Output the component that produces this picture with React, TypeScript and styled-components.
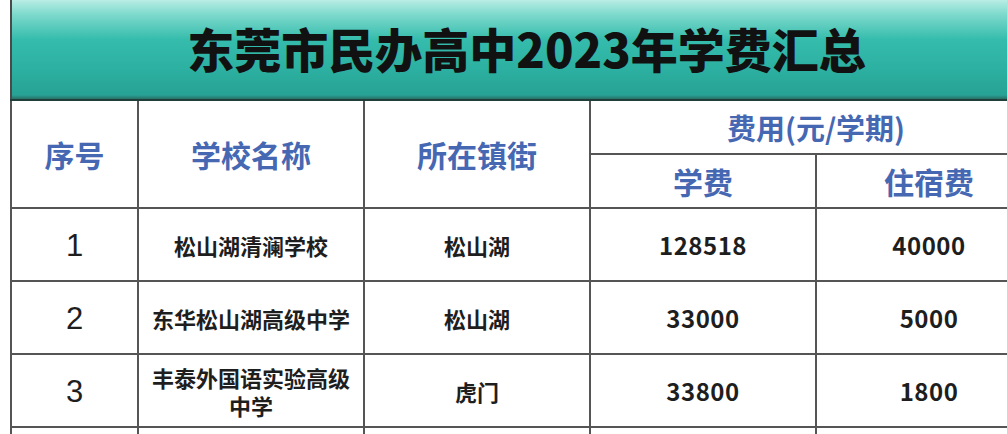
import { type FC } from 'react';
import styled, { createGlobalStyle } from 'styled-components';

const GlobalStyle = createGlobalStyle`
  html, body {
    margin: 0;
    padding: 0;
    background: #ffffff;
    overflow: hidden;
  }
  body {
    font-family: "Noto Sans CJK SC", "Noto Sans", sans-serif;
  }
`;

const Page = styled.div`
  width: 1007px;
  height: 434px;
  overflow: hidden;
  padding-left: 10px;
  box-sizing: border-box;
`;

const Table = styled.table`
  width: 1031px;
  border-collapse: collapse;
  table-layout: fixed;
`;

const TitleCell = styled.th`
  height: 95px;
  padding: 0 0 4px;
  border: 2px solid #4a4a4a;
  border-top: none;
  border-bottom: 2px solid #1f3f3b;
  background: linear-gradient(
    to bottom,
    #b9ede5 0%,
    #7fdacd 14%,
    #35bcac 40%,
    #2cb0a1 70%,
    #27a294 96%,
    #2a6f67 100%
  );
  font-family: "Noto Sans CJK SC", sans-serif;
  font-weight: 900;
  font-size: 47px;
  color: #111;
  text-align: center;
  vertical-align: middle;
`;

const HeadCell = styled.th<{ $h?: number; $size?: number }>`
  height: ${(p) => p.$h ?? 52}px;
  padding: 0;
  border: 2px solid #555;
  color: #4668b3;
  font-family: "Noto Sans CJK SC", sans-serif;
  font-weight: 700;
  font-size: ${(p) => p.$size ?? 30}px;
  line-height: 1;
  text-align: center;
  vertical-align: middle;
`;

const Row = styled.tr<{ $h: number }>`
  height: ${(p) => p.$h}px;
`;

const Cell = styled.td`
  padding: 0 8px;
  border: 2px solid #555;
  text-align: center;
  vertical-align: middle;
  color: #1e1e1e;
`;

const IndexCell = styled(Cell)`
  font-family: "Liberation Sans", Arial, sans-serif;
  font-size: 31px;
  font-weight: 400;
  padding-top: 3px;
`;

const NameCell = styled(Cell)`
  font-family: "Noto Sans CJK SC", sans-serif;
  font-size: 22px;
  font-weight: 700;
  line-height: 28px;
`;

const FeeCell = styled(Cell)`
  font-family: "Noto Sans CJK SC", "Noto Sans", sans-serif;
  font-size: 24px;
  font-weight: 700;
  letter-spacing: 0.5px;
`;

const rows = [
  { no: '1', name: '松山湖清澜学校', town: '松山湖', fee: '128518', dorm: '40000', h: 73 },
  { no: '2', name: '东华松山湖高级中学', town: '松山湖', fee: '33000', dorm: '5000', h: 73 },
  { no: '3', name: '丰泰外国语实验高级中学', town: '虎门', fee: '33800', dorm: '1800', h: 73 },
];

const App: FC = () => (
  <>
    <GlobalStyle />
    <Page>
      <Table>
        <colgroup>
          <col style={{ width: 127 }} />
          <col style={{ width: 226 }} />
          <col style={{ width: 226 }} />
          <col style={{ width: 226 }} />
          <col style={{ width: 226 }} />
        </colgroup>
        <thead>
          <tr>
            <TitleCell colSpan={5}>东莞市民办高中2023年学费汇总</TitleCell>
          </tr>
          <tr>
            <HeadCell rowSpan={2}>序号</HeadCell>
            <HeadCell rowSpan={2}>学校名称</HeadCell>
            <HeadCell rowSpan={2}>所在镇街</HeadCell>
            <HeadCell colSpan={2} $h={52} $size={29}>
              费用(元/学期)
            </HeadCell>
          </tr>
          <tr>
            <HeadCell $h={52}>学费</HeadCell>
            <HeadCell $h={52}>住宿费</HeadCell>
          </tr>
        </thead>
        <tbody>
          {rows.map((r) => (
            <Row key={r.no} $h={r.h}>
              <IndexCell>{r.no}</IndexCell>
              <NameCell>{r.name}</NameCell>
              <NameCell>{r.town}</NameCell>
              <FeeCell>{r.fee}</FeeCell>
              <FeeCell>{r.dorm}</FeeCell>
            </Row>
          ))}
          <Row $h={73}>
            <IndexCell />
            <NameCell />
            <NameCell />
            <FeeCell />
            <FeeCell />
          </Row>
        </tbody>
      </Table>
    </Page>
  </>
);

export default App;
